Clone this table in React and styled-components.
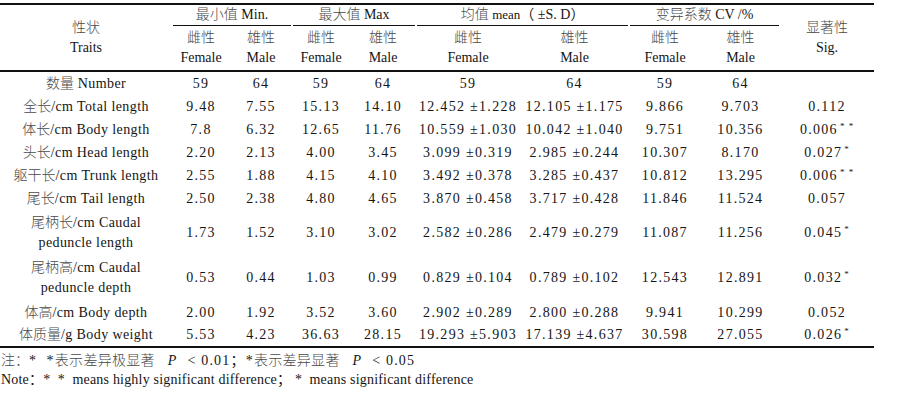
import React from 'react'
import styled, { createGlobalStyle } from 'styled-components'

const GlobalStyle = createGlobalStyle`
  body {
    margin: 0;
    background: #fff;
    font-family: "Liberation Serif", "Noto Sans CJK SC", serif;
    color: #151515;
  }
`

const Page = styled.div`
  padding-top: 3px;
  width: 899px;
`

const Table = styled.table`
  width: 874px;
  table-layout: fixed;
  border-collapse: collapse;
  border-top: 2px solid #111;
  border-bottom: 2px solid #111;
  font-size: 14px;
`

const Th = styled.th`
  font-weight: normal;
  text-align: center;
  vertical-align: middle;
  padding: 0;
  line-height: 20px;
  height: ${p => p.h || 20}px;
  border-bottom: ${p => (p.rule ? '2px solid #111' : 'none')};
`

const GroupLabel = styled.div`
  margin: 0 1px;
  border-bottom: 1px solid #111;
  line-height: 20px;
  white-space: nowrap;
`

const Td = styled.td`
  padding: 0;
  text-align: center;
  vertical-align: middle;
  white-space: nowrap;
  height: ${p => p.h}px;
  line-height: 20px;
  letter-spacing: ${p => (p.num ? '1.3px' : '0.4px')};
`

const Cn = styled.span`
  font-family: "Noto Sans CJK SC", sans-serif;
  font-weight: 300;
  color: #4a4a4a;
  letter-spacing: ${p => p.sp || 0}px;
  line-height: 1;
`

const Small = styled.span`
  font-size: 13px;
`

const Sup = styled.sup`
  font-size: 9px;
  letter-spacing: 1px;
  vertical-align: 5px;
  line-height: 0;
  margin-left: 2px;
`

const Notes = styled.div`
  padding: 3px 0 0 1px;
  font-size: 14px;
  line-height: 19px;
`

const NoteLine = styled.div`
  white-space: nowrap;
  letter-spacing: ${p => p.sp || 0}px;
`

const It = styled.i`
  margin: 0 10px 0 8px;
`

const cols = [172, 58, 62, 58, 66, 104, 109, 72, 79, 94]

const groups = [
  { cn: '最小值', en: 'Min.' },
  { cn: '最大值', en: 'Max' },
  { cn: '均值', en: <><Small>mean</Small>（ ±S. D）</> },
  { cn: '变异系数', en: 'CV /%' },
]

const rows = [
  { cn: '数量', en: ' Number', v: ['59', '64', '59', '64', '59', '64', '59', '64', ''], h: 23 },
  { cn: '全长', en: '/cm Total length', v: ['9.48', '7.55', '15.13', '14.10', '12.452 ±1.228', '12.105 ±1.175', '9.866', '9.703', '0.112'], h: 23 },
  { cn: '体长', en: '/cm Body length', v: ['7.8', '6.32', '12.65', '11.76', '10.559 ±1.030', '10.042 ±1.040', '9.751', '10.356', '0.006'], s: '* *', h: 23 },
  { cn: '头长', en: '/cm Head length', v: ['2.20', '2.13', '4.00', '3.45', '3.099 ±0.319', '2.985 ±0.244', '10.307', '8.170', '0.027'], s: '*', h: 23 },
  { cn: '躯干长', en: '/cm Trunk length', v: ['2.55', '1.88', '4.15', '4.10', '3.492 ±0.378', '3.285 ±0.437', '10.812', '13.295', '0.006'], s: '* *', h: 23 },
  { cn: '尾长', en: '/cm Tail length', v: ['2.50', '2.38', '4.80', '4.65', '3.870 ±0.458', '3.717 ±0.428', '11.846', '11.524', '0.057'], h: 23 },
  { cn: '尾柄长', en: '/cm Caudal', en2: 'peduncle length', v: ['1.73', '1.52', '3.10', '3.02', '2.582 ±0.286', '2.479 ±0.279', '11.087', '11.256', '0.045'], s: '*', h: 45 },
  { cn: '尾柄高', en: '/cm Caudal', en2: 'peduncle depth', v: ['0.53', '0.44', '1.03', '0.99', '0.829 ±0.104', '0.789 ±0.102', '12.543', '12.891', '0.032'], s: '*', h: 46 },
  { cn: '体高', en: '/cm Body depth', v: ['2.00', '1.92', '3.52', '3.60', '2.902 ±0.289', '2.800 ±0.288', '9.941', '10.299', '0.052'], h: 23 },
  { cn: '体质量', en: '/g Body weight', v: ['5.53', '4.23', '36.63', '28.15', '19.293 ±5.903', '17.139 ±4.637', '30.598', '27.055', '0.026'], s: '*', h: 22 },
]

const SexHead = ({ cn, en }) => (
  <Th h={44} rule>
    <Cn>{cn}</Cn>
    <br />
    {en}
  </Th>
)

const App = () => (
  <Page>
    <GlobalStyle />
    <Table>
      <colgroup>
        {cols.map((w, i) => <col key={i} style={{ width: w }} />)}
      </colgroup>
      <thead>
        <tr>
          <Th rowSpan={2} rule>
            <Cn>性状</Cn>
            <br />
            Traits
          </Th>
          {groups.map((g, i) => (
            <Th key={i} colSpan={2} h={20}>
              <GroupLabel>
                <Cn>{g.cn}</Cn> {g.en}
              </GroupLabel>
            </Th>
          ))}
          <Th rowSpan={2} rule>
            <Cn>显著性</Cn>
            <br />
            Sig.
          </Th>
        </tr>
        <tr>
          {groups.map((g, i) => (
            <React.Fragment key={i}>
              <SexHead cn="雌性" en="Female" />
              <SexHead cn="雄性" en="Male" />
            </React.Fragment>
          ))}
        </tr>
      </thead>
      <tbody>
        {rows.map((r, i) => (
          <tr key={i}>
            <Td h={r.h}>
              <Cn>{r.cn}</Cn>
              {r.en}
              {r.en2 && <><br />{r.en2}</>}
            </Td>
            {r.v.map((x, j) => (
              <Td key={j} num h={r.h}>
                {x}
                {j === 8 && r.s && <Sup>{r.s}</Sup>}
              </Td>
            ))}
          </tr>
        ))}
      </tbody>
    </Table>
    <Notes>
      <NoteLine sp={1.2}>
        <Cn>注：</Cn>* &nbsp;*<Cn sp={0.3}>表示差异极显著</Cn> <It>P</It>&lt; 0.01；*<Cn sp={0.3}>表示差异显著</Cn> <It>P</It>&lt; 0.05
      </NoteLine>
      <NoteLine sp={0.2}>
        Note：* &nbsp;* &nbsp;means highly significant difference； * &nbsp;means significant difference
      </NoteLine>
    </Notes>
  </Page>
)

export default App
